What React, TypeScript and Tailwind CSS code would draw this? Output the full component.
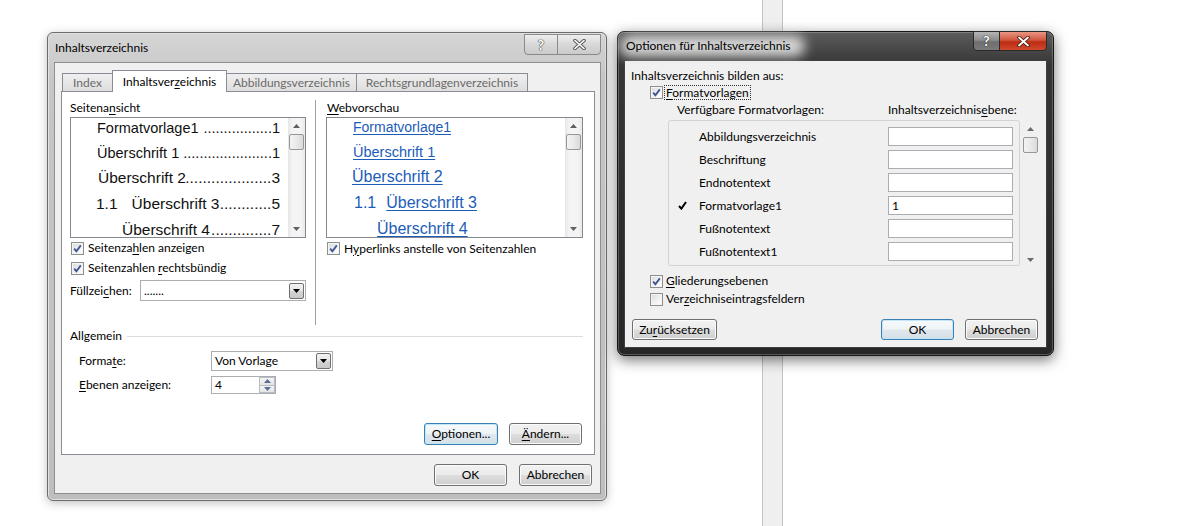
import type { ReactNode } from 'react'
import clsx from 'clsx'

const BTN = 'flex items-center justify-center rounded-[3px] border text-[12px]'
const BTN_NORMAL =
  'border-[#707070] bg-[linear-gradient(180deg,#f2f2f2_0%,#ebebeb_48%,#dddddd_52%,#cfcfcf_100%)] shadow-[inset_0_0_0_1px_#fbfbfb]'
const BTN_DEFAULT =
  'border-[#3c7fb1] bg-[linear-gradient(180deg,#f6fafc_0%,#eef3f6_48%,#e0e8ee_52%,#d4dfe6_100%)] shadow-[inset_0_0_0_1px_#c2e5f8]'
const PREVIEW_FONT = "font-['Liberation_Sans',Arial,sans-serif]"
const LINK = 'text-[#1c5db8] underline decoration-1 underline-offset-[2px]'

function U({ children }: { children: ReactNode }) {
  return <span className="underline decoration-1 underline-offset-[2px]">{children}</span>
}

function Arrow({ up, color = '#5f5f5f' }: { up?: boolean; color?: string }) {
  return (
    <svg width="7" height="4" viewBox="0 0 7 4">
      <path d={up ? 'M0 4 L3.5 0 L7 4 Z' : 'M0 0 L7 0 L3.5 4 Z'} fill={color} />
    </svg>
  )
}

function CheckBox({ checked }: { checked?: boolean }) {
  return (
    <span className="flex h-[13px] w-[13px] shrink-0 items-center justify-center border border-[#8e8f8f] bg-[linear-gradient(135deg,#d9dadc,#f7f7f7_70%,#ffffff)] shadow-[inset_0_0_0_1px_#f4f4f4]">
      {checked ? (
        <svg width="11" height="11" viewBox="0 0 11 11">
          <path d="M2.2 5.6 L4.4 8.2 L8.8 2.4" fill="none" stroke="#3f5291" strokeWidth="1.8" />
        </svg>
      ) : null}
    </span>
  )
}

function CheckRow({ checked, children, className }: { checked?: boolean; children: ReactNode; className?: string }) {
  return (
    <div className={clsx('flex items-center gap-[4px]', className)}>
      <CheckBox checked={checked} />
      <span className="whitespace-nowrap">{children}</span>
    </div>
  )
}

function Button({ children, className, focused }: { children: ReactNode; className: string; focused?: boolean }) {
  return <div className={clsx(BTN, focused ? BTN_DEFAULT : BTN_NORMAL, className)}>{children}</div>
}

function DropButton() {
  return (
    <span className="flex h-[16px] w-[15px] items-center justify-center rounded-[2px] border border-[#707070] bg-[linear-gradient(180deg,#f2f2f2,#e6e6e6_50%,#d4d4d4_51%,#c9c9c9)]">
      <Arrow color="#000" />
    </span>
  )
}

function Combo({ value, className }: { value: string; className: string }) {
  return (
    <div className={clsx('flex items-center border border-[#abadb3] bg-white pl-[3px] pr-px', className)}>
      <span className="min-w-0 flex-1 whitespace-nowrap">{value}</span>
      <DropButton />
    </div>
  )
}

function VScroll() {
  return (
    <div className="flex w-[17px] shrink-0 flex-col items-center bg-[linear-gradient(90deg,#e6e6e6,#f4f4f4_25%,#f4f4f4_75%,#e9e9e9)]">
      <div className="flex h-[16px] w-full items-center justify-center">
        <Arrow up />
      </div>
      <div className="h-[16px] w-[15px] rounded-[2px] border border-[#979797] bg-[linear-gradient(90deg,#f3f3f3,#e9e9e9_50%,#dadada)]" />
      <div className="flex-1" />
      <div className="flex h-[16px] w-full items-center justify-center">
        <Arrow />
      </div>
    </div>
  )
}

function PageLine({ className, label, page, gap }: { className: string; label: ReactNode; page: string; gap?: boolean }) {
  return (
    <div className={clsx('flex items-center whitespace-nowrap', className)}>
      <span>{label}</span>
      <span className={clsx('flex min-w-0 flex-1 justify-end overflow-hidden', gap && 'ml-[4px]')}>
        <span>{'.'.repeat(90)}</span>
      </span>
      <span>{page}</span>
    </div>
  )
}

function TabItem({ label, active, className }: { label: ReactNode; active?: boolean; className: string }) {
  return (
    <div
      className={clsx(
        'flex items-center justify-center border border-[#898c95] whitespace-nowrap',
        active
          ? 'relative z-10 h-[22px] border-b-0 bg-white text-black'
          : 'h-[19px] bg-[linear-gradient(180deg,#efefef,#dedede)] text-[#6a6a6a]',
        className,
      )}
    >
      {label}
    </div>
  )
}

function TocDialog() {
  return (
    <div className="absolute left-[47px] top-[32px] flex h-[469px] w-[560px] flex-col rounded-[6px] border border-[#6b6b6b] bg-[linear-gradient(180deg,#d6d6d6,#c6c6c6_10%,#bebebe)] pb-[6px] pl-[6px] pr-[5px] shadow-[0_2px_10px_rgba(0,0,0,0.25),inset_0_0_0_1px_#e2e2e2]">
      <div className="flex h-[29px] shrink-0 items-center pl-px">Inhaltsverzeichnis</div>
      <div className="absolute right-[5px] top-[1px] flex h-[21px]">
        <div className="flex w-[34px] items-center justify-center rounded-bl-[4px] border border-[#8a8a8a] bg-[linear-gradient(180deg,#eeeeee,#d8d8d8_50%,#cacaca)] text-[14px] font-bold text-white [text-shadow:0_0_1px_#444,0_0_1px_#444,0_0_1px_#444]">
          ?
        </div>
        <div className="-ml-px flex w-[44px] items-center justify-center rounded-br-[4px] border border-[#8a8a8a] bg-[linear-gradient(180deg,#eeeeee,#d8d8d8_50%,#cacaca)]">
          <svg width="13" height="11" viewBox="0 0 13 11">
            <path d="M2 1.5 L11 9.5 M11 1.5 L2 9.5" stroke="#5a5a5a" strokeWidth="3.6" strokeLinecap="round" />
            <path d="M2 1.5 L11 9.5 M11 1.5 L2 9.5" stroke="#ffffff" strokeWidth="1.6" strokeLinecap="round" />
          </svg>
        </div>
      </div>

      <div className="flex flex-1 flex-col border border-[#8f8f8f] bg-[#f0f0f0] pl-[6px] pr-[5px]">
        <div className="-mb-px mt-[7px] flex h-[22px] items-end pl-px">
          <TabItem label="Index" className="w-[51px]" />
          <TabItem
            active
            label={
              <>
                Inhaltsver<U>z</U>eichnis
              </>
            }
            className="-ml-px w-[115px]"
          />
          <TabItem label="Abbildungsverzeichnis" className="-ml-px w-[131px]" />
          <TabItem label="Rechtsgrundlagenverzeichnis" className="-ml-px w-[172px]" />
        </div>

        <div className="flex h-[364px] flex-col border border-[#898c95] bg-white pl-[8px] pr-[11px]">
          <div className="mt-[8px] flex h-[225px]">
            <div className="flex w-[236px] flex-col">
              <div className="h-[17px]">
                Seitena<U>n</U>sicht
              </div>
              <div className={clsx('flex h-[121px] overflow-hidden border border-[#828790] bg-white text-[#111]', PREVIEW_FONT)}>
                <div className="-mt-[3px] min-w-0 flex-1 pr-[8px]">
                  <PageLine className="h-[25px] pl-[26px] text-[14.5px]" label="Formatvorlage1" page="1" gap />
                  <PageLine className="h-[25px] pl-[26px] text-[14.5px]" label="Überschrift 1" page="1" gap />
                  <PageLine className="h-[26px] pl-[27px] text-[15.5px]" label="Überschrift 2" page="3" />
                  <PageLine
                    className="h-[26px] pl-[25px] text-[15.5px]"
                    label={
                      <>
                        <span>1.1</span>
                        <span className="ml-[14px]">Überschrift 3</span>
                      </>
                    }
                    page="5"
                  />
                  <PageLine className="h-[26px] pl-[51px] text-[15.5px]" label="Überschrift 4" page="7" />
                </div>
                <VScroll />
              </div>
              <CheckRow checked className="h-[20px] pl-px">
                Seitenza<U>h</U>len anzeigen
              </CheckRow>
              <CheckRow checked className="h-[20px] pl-px">
                Seitenzahlen <U>r</U>echtsbündig
              </CheckRow>
              <div className="mt-[2px] flex h-[21px] items-center">
                <span className="w-[70px]">
                  Füllzei<U>c</U>hen:
                </span>
                <Combo value="......." className="h-[21px] w-[166px]" />
              </div>
            </div>

            <div className="ml-[9px] w-px bg-[#a0a0a0]" />

            <div className="ml-[10px] flex w-[257px] flex-col">
              <div className="h-[17px] pl-px">
                <U>W</U>ebvorschau
              </div>
              <div className={clsx('flex h-[121px] overflow-hidden border border-[#828790] bg-white', PREVIEW_FONT)}>
                <div className="-mt-[4px] min-w-0 flex-1 whitespace-nowrap text-[#1c5db8]">
                  <div className="flex h-[25px] items-center pl-[26px] text-[14px]">
                    <span className={LINK}>Formatvorlage1</span>
                  </div>
                  <div className="flex h-[25px] items-center pl-[26px] text-[14.5px]">
                    <span className={LINK}>Überschrift 1</span>
                  </div>
                  <div className="flex h-[26px] items-center pl-[25px] text-[16px]">
                    <span className={LINK}>Überschrift 2</span>
                  </div>
                  <div className="flex h-[26px] items-center pl-[27px] text-[16px]">
                    <span>1.1</span>
                    <span className={clsx('ml-[10px]', LINK)}>Überschrift 3</span>
                  </div>
                  <div className="flex h-[26px] items-center pl-[50px] text-[16px]">
                    <span className={LINK}>Überschrift 4</span>
                  </div>
                </div>
                <VScroll />
              </div>
              <CheckRow checked className="h-[21px] pl-px">
                H<U>y</U>perlinks anstelle von Seitenzahlen
              </CheckRow>
            </div>
          </div>

          <div className="mt-[3px] flex h-[16px] items-center">
            <span>Allgemein</span>
            <span className="ml-[5px] h-px flex-1 bg-[#dcdcdc]" />
          </div>
          <div className="mt-[7px] flex h-[20px] items-center pl-[9px]">
            <span className="w-[132px]">
              Forma<U>t</U>e:
            </span>
            <Combo value="Von Vorlage" className="h-[20px] w-[122px]" />
          </div>
          <div className="mt-[5px] flex h-[18px] items-center pl-[9px]">
            <span className="w-[132px]">
              <U>E</U>benen anzeigen:
            </span>
            <div className="flex h-[18px] w-[65px] border border-[#abadb3] bg-white">
              <span className="flex-1 pl-[3px] leading-[16px]">4</span>
              <div className="flex w-[16px] flex-col">
                <span className="flex flex-1 items-center justify-center border border-[#b6bcc6] bg-[linear-gradient(180deg,#f5f5f5,#e4e4e4)]">
                  <Arrow up color="#5b6e96" />
                </span>
                <span className="-mt-px flex flex-1 items-center justify-center border border-[#b6bcc6] bg-[linear-gradient(180deg,#f5f5f5,#e4e4e4)]">
                  <Arrow color="#5b6e96" />
                </span>
              </div>
            </div>
          </div>
          <div className="mr-px mt-[29px] flex justify-end gap-[11px]">
            <Button focused className="h-[22px] w-[74px]">
              <span>
                <U>O</U>ptionen...
              </span>
            </Button>
            <Button className="h-[22px] w-[73px]">
              <span>
                <U>Ä</U>ndern...
              </span>
            </Button>
          </div>
        </div>

        <div className="mr-[3px] mt-[9px] flex justify-end gap-[12px]">
          <Button className="h-[22px] w-[73px]">OK</Button>
          <Button className="h-[22px] w-[73px]">Abbrechen</Button>
        </div>
      </div>
    </div>
  )
}

const STYLES = ['Abbildungsverzeichnis', 'Beschriftung', 'Endnotentext', 'Formatvorlage1', 'Fußnotentext', 'Fußnotentext1']

function OptionsDialog() {
  return (
    <div className="absolute left-[617px] top-[31px] flex h-[325px] w-[437px] flex-col rounded-[7px] border border-[#161616] bg-[linear-gradient(180deg,#5c5c5c_0%,#363636_10%,#2c2c2c_60%,#262626_100%)] pb-[7px] pl-[6px] pr-[6px] shadow-[0_4px_14px_rgba(0,0,0,0.55),inset_0_0_0_1px_rgba(255,255,255,0.22)]">
      <div className="relative flex h-[28px] shrink-0 items-center pl-[2px]">
        <div className="absolute -left-[4px] top-[3px] h-[22px] w-[185px] rounded-full bg-[#e4e4e4] opacity-90 blur-[6px]" />
        <span className="relative">Optionen für Inhaltsverzeichnis</span>
      </div>
      <div className="absolute -top-px right-[6px] flex h-[20px]">
        <div className="flex w-[27px] items-center justify-center rounded-bl-[4px] border border-[#2a2a2a] bg-[linear-gradient(180deg,#b5b5b5,#8c8c8c_45%,#6e6e6e_55%,#7a7a7a)] text-[14px] font-bold text-white [text-shadow:0_0_1px_#222,0_0_1px_#222]">
          ?
        </div>
        <div className="-ml-px flex w-[48px] items-center justify-center rounded-br-[4px] border border-[#2a2a2a] bg-[linear-gradient(180deg,#e99684,#d0563f_45%,#bb2d14_55%,#d2492c)]">
          <svg width="13" height="11" viewBox="0 0 13 11">
            <path d="M2 1.5 L11 9.5 M11 1.5 L2 9.5" stroke="#4a1a10" strokeWidth="3.6" strokeLinecap="round" />
            <path d="M2 1.5 L11 9.5 M11 1.5 L2 9.5" stroke="#ffffff" strokeWidth="1.8" strokeLinecap="round" />
          </svg>
        </div>
      </div>

      <div className="flex flex-1 flex-col border border-[#3f3f3f] bg-[#f0f0f0] pl-[6px] pr-[8px]">
        <div className="mt-[7px] h-[16px]">Inhaltsverzeichnis bilden aus:</div>
        <div className="flex h-[16px] items-center gap-px pl-[19px]">
          <CheckBox checked />
          <span className="border border-dotted border-[#303030] px-px leading-[13px]">
            <U>F</U>ormatvorlagen
          </span>
        </div>
        <div className="mt-[2px] flex h-[16px] items-center pl-[46px]">
          <span className="w-[211px]">Verfügbare Formatvorlagen:</span>
          <span>
            Inhaltsverzeichnis<U>e</U>bene:
          </span>
        </div>
        <div className="mt-[2px] flex h-[146px]">
          <div className="ml-[37px] w-[354px] rounded-[3px] border border-[#d3d3d3] bg-[#f0f0f0] pt-[4px]">
            {STYLES.map((name) => (
              <div key={name} className="flex h-[23px] items-center">
                <span className="flex w-[30px] pl-[9px]">
                  {name === 'Formatvorlage1' ? (
                    <svg width="9" height="9" viewBox="0 0 9 9">
                      <path d="M1 5 L3.4 7.6 L8 1" fill="none" stroke="#000" strokeWidth="2" />
                    </svg>
                  ) : null}
                </span>
                <span className="w-[189px]">{name}</span>
                <span className="h-[19px] w-[125px] border border-[#abadb3] bg-white pl-[3px] leading-[17px]">
                  {name === 'Formatvorlage1' ? '1' : ''}
                </span>
              </div>
            ))}
          </div>
          <div className="ml-[2px] flex w-[16px] flex-col items-center">
            <div className="flex h-[17px] w-full items-center justify-center">
              <Arrow up color="#6a6a6a" />
            </div>
            <div className="h-[16px] w-[15px] rounded-[2px] border border-[#979797] bg-[linear-gradient(90deg,#f3f3f3,#e9e9e9_50%,#dadada)]" />
            <div className="flex-1" />
            <div className="flex h-[12px] w-full items-center justify-center">
              <Arrow color="#6a6a6a" />
            </div>
          </div>
        </div>
        <CheckRow checked className="mt-[7px] h-[16px] pl-[19px] !gap-[3px]">
          <U>G</U>liederungsebenen
        </CheckRow>
        <CheckRow className="mt-[2px] h-[16px] pl-[19px] !gap-[3px]">
          Ver<U>z</U>eichniseintragsfeldern
        </CheckRow>
        <div className="mt-[12px] flex items-center">
          <Button className="ml-px h-[21px] w-[85px]">
            <span>
              Zu<U>r</U>ücksetzen
            </span>
          </Button>
          <div className="flex-1" />
          <Button focused className="h-[21px] w-[73px]">
            OK
          </Button>
          <Button className="ml-[11px] h-[21px] w-[73px]">Abbrechen</Button>
        </div>
      </div>
    </div>
  )
}

export default function App() {
  return (
    <div className="relative h-[526px] w-[1180px] overflow-hidden bg-white font-['Segoe_UI',Lato,sans-serif] text-[12px] leading-[16px] text-black">
      <div className="flex h-full">
        <div className="w-[762px] shrink-0" />
        <div className="w-[21px] shrink-0 border-x border-[#c3c3c3] bg-[#efefef]" />
      </div>
      <TocDialog />
      <OptionsDialog />
    </div>
  )
}
